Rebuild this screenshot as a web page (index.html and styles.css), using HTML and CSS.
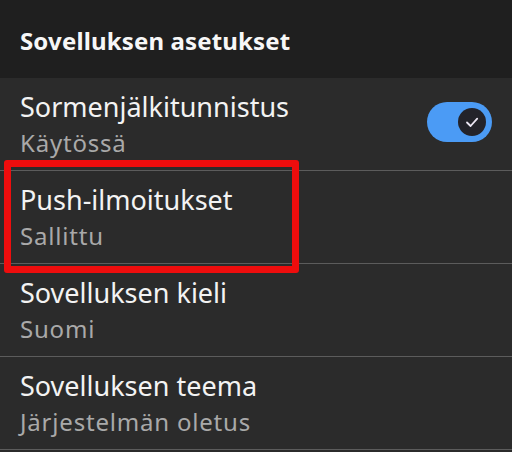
FILE: index.html
```html
<!DOCTYPE html>
<html lang="fi">
<head>
<meta charset="utf-8">
<link rel="stylesheet" href="styles.css">
</head>
<body>
<div class="screen">
  <header class="header">Sovelluksen asetukset</header>
  <ul class="list">
    <li class="row">
      <div class="texts">
        <div class="title">Sormenjälkitunnistus</div>
        <div class="sub">Käytössä</div>
      </div>
      <div class="switch">
        <div class="thumb">
          <svg width="16" height="16" viewBox="0 0 16 16"><path d="M3 8.5 L6.6 12 L13.2 4.6" fill="none" stroke="#ece6f3" stroke-width="1.8" stroke-linecap="round" stroke-linejoin="round"/></svg>
        </div>
      </div>
    </li>
    <li class="row highlighted">
      <div class="texts">
        <div class="title">Push-ilmoitukset</div>
        <div class="sub">Sallittu</div>
      </div>
      <div class="mark"></div>
    </li>
    <li class="row">
      <div class="texts">
        <div class="title">Sovelluksen kieli</div>
        <div class="sub">Suomi</div>
      </div>
    </li>
    <li class="row">
      <div class="texts">
        <div class="title">Sovelluksen teema</div>
        <div class="sub">Järjestelmän oletus</div>
      </div>
    </li>
  </ul>
</div>
</body>
</html>
```
FILE: styles.css
```css
html, body {
  margin: 0;
  padding: 0;
  background: #2b2b2b;
}
.screen {
  width: 512px;
  height: 452px;
  overflow: hidden;
  background: #2b2b2b;
  font-family: "Noto Sans", "Open Sans", sans-serif;
}
.header {
  height: 78px;
  box-sizing: border-box;
  padding: 25px 0 0 20px;
  background: #1f1f1f;
  color: #f7f7f7;
  font-size: 24px;
  font-weight: 700;
  line-height: 32px;
  letter-spacing: 0.15px;
}
.list {
  list-style: none;
  margin: 0;
  padding: 0;
}
.row {
  position: relative;
  height: 92px;
  border-bottom: 1px solid #5c5c5c;
  display: flex;
  align-items: flex-start;
  justify-content: space-between;
  padding: 0 20px;
}
.texts {
  padding-top: 13px;
  display: flex;
  flex-direction: column;
  gap: 5px;
}
.title {
  color: #f3f3f3;
  font-size: 27px;
  line-height: 32px;
}
.sub {
  color: #a9a9a9;
  font-size: 24px;
  line-height: 30px;
  letter-spacing: 0.8px;
}
.switch {
  margin-top: 24px;
  width: 65px;
  height: 40px;
  border-radius: 20px;
  background: #4b9bf5;
  display: flex;
  align-items: center;
  justify-content: flex-end;
  padding-right: 6px;
  box-sizing: border-box;
}
.thumb {
  width: 28px;
  height: 28px;
  border-radius: 50%;
  background: #23232a;
  display: flex;
  align-items: center;
  justify-content: center;
}
.mark {
  position: absolute;
  left: 4px;
  top: -11px;
  width: 295px;
  height: 113px;
  box-sizing: border-box;
  border: 7px solid #ee0d0d;
  border-radius: 3px;
}
```
